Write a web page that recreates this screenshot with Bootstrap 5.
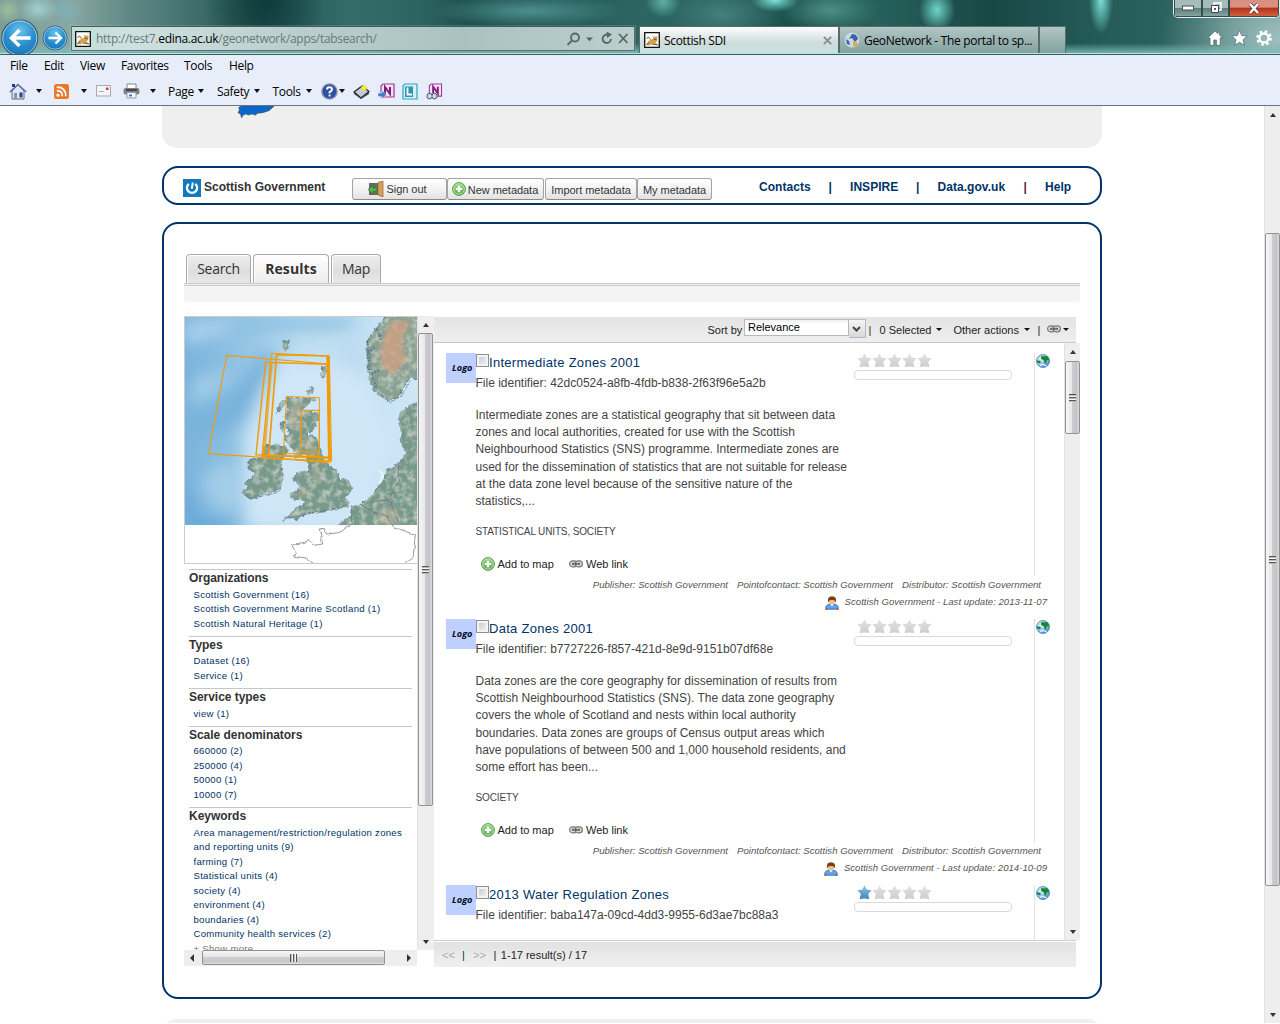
<!DOCTYPE html>
<html lang="en">
<head>
<meta charset="utf-8">
<title>Scottish SDI</title>
<link rel="stylesheet" href="https://cdn.jsdelivr.net/npm/bootstrap@5.3.0/dist/css/bootstrap.min.css">
<style>
html,body{height:1024px;overflow:hidden}
body{font:12px/17px "Liberation Sans",Arial,sans-serif;color:#333;background:#fff}
svg{display:block;flex:none}
a{text-decoration:none;color:inherit}
/* browser frame */
.aero{height:55px;border-bottom:1px solid #34605f;box-shadow:inset 0 -1px #b9e2e0;overflow:hidden;
background:
radial-gradient(ellipse 14px 14px at 8px 10px,#9cbf9a,#9cbf9a00),
radial-gradient(ellipse 20px 14px at 38px 9px,#9fd0cf,#9fd0cf00),
radial-gradient(ellipse 18px 12px at 66px 10px,#7fb0b6,#7fb0b600),
linear-gradient(#0000 80%,#7dbcbadd 98%),
radial-gradient(ellipse 18px 16px at 663px 2px,#5fb0a4,#5fb0a400),
radial-gradient(ellipse 24px 12px at 775px 0,#7de8dd,#7de8dd00),
radial-gradient(ellipse 18px 22px at 937px 10px,#70d4c9,#70d4c900),
radial-gradient(ellipse 12px 34px at 1101px 0,#7ae0d8,#7ae0d800),
radial-gradient(ellipse 95px 16px at 530px 11px,#4c8f8b,#4c8f8b00),
radial-gradient(ellipse 50px 22px at 830px 10px,#4b8f86,#4b8f8600),
radial-gradient(ellipse 60px 30px at 722px 14px,#44807c,#44807c00),
radial-gradient(ellipse 60px 60px at 265px 4px,#0f3b3b,#0f3b3b00),
radial-gradient(ellipse 120px 90px at 1280px 40px,#9cc0be,#9cc0be00),
linear-gradient(90deg,#7c9c96 0,#88a8a4 70px,#5f8885 130px,#1f5451 260px,#356b69 350px,#2d6462 420px,#1e504f 470px,#2c6562 640px,#1d504d 800px,#26605b 880px,#184846 990px,#245b58 1100px,#2f6562 1200px,#5d8583 1280px)}
.seg{font-family:"Open Sans","Noto Sans",sans-serif;color:#000;letter-spacing:-.34px}
.navbtns{width:71px;height:38px;padding:3px 0 0 1px}
.addr{width:564px;height:25px;margin-top:26px;border:1px solid #5e6e6e;border-top-color:#465b5b;background:linear-gradient(90deg,#bfdcd4 0,#cde2e0 10%,#bacfcd 40%,#a9c2c0 70%,#bccfcd);box-shadow:0 0 0 1px #ffffff22}
.url{color:#6c7877;letter-spacing:-.31px}
.tabby{height:27px;margin-top:26px;border:1px solid #5a6b6b;border-bottom:0;background:linear-gradient(#ffffff77,#ffffff22),#6f9492}
.tabby.on{width:200px;background:linear-gradient(#fdfefe,#cfdcdb 60%,#c4e2e0)}
.tabby .seg{line-height:25px}
.winbtn{right:0;top:0;width:107px;height:18px;border:1px solid #e6eeee;border-top:0;border-radius:0 0 5px 5px;overflow:hidden;background:#2c4a4a}
.winbtn>span{height:17px;border:1px solid #334e4e;border-top:0;background:linear-gradient(#a6bbbb 50%,#5f7f7e 52%,#85a3a1)}
.winbtn .cls{background:linear-gradient(#d89080 45%,#b4301c 50%,#d0603c)}
.menus{height:51px;background:#e7eefa;border-bottom:1px solid #6b7380}
.menus .mi{position:static;line-height:22px}
.caret{width:0;height:0;border:3.5px solid transparent;border-top:4px solid #111;border-bottom:0;flex:none}
.caret.s{border-width:3px;border-top-width:3px}
/* page */
.viewport{height:917px;overflow:hidden}
.site{width:940px}
.banner{height:42px;background:#efefef;border-radius:0 0 15px 15px}
.foot{height:40px;background:#efefef;border-radius:15px 15px 0 0;margin-top:20px}
.bluebox{border:2px solid #003366;border-radius:16px;background:#fff}
.topnav{height:39px;margin-top:18px;padding:0 0 0 19px}
.who{width:148px;margin:3px 0 0 3px;font-weight:700}
.xbtn{height:22px;margin-top:6px;border:1px solid #a3a3a3;border-bottom-color:#8a8a8a;border-radius:3px;background:linear-gradient(#fff,#f3f3f3 50%,#e2e2e2);font-size:11px;line-height:20px;letter-spacing:-.04px}
.tlinks{color:#003366;font-weight:700;font-size:12px;letter-spacing:.05px;margin-top:4px}
.mainbox{height:777px;margin-top:17px;padding:30px 20px 0 20px}
.xtab{height:29px;border:1px solid #a9a9a9;border-bottom:0;border-radius:4px 4px 0 0;background:linear-gradient(#eee,#dedede 60%,#e8e8e8);box-shadow:inset 1px 1px #fff;font:14px/28px "Open Sans",sans-serif;letter-spacing:-.3px;text-align:center;margin-right:2px;color:#333}
.xtab.on{background:linear-gradient(#fff,#ececec);font-weight:700;letter-spacing:.1px}
.strip{height:3px;background:#ececec;border:solid #cdcdcd;border-width:1px 0}
.substrip{height:16px;background:#f4f4f4;border-radius:0 0 4px 4px}
.work{margin-top:14px;height:651px;width:896px}
.leftcol{width:233px;height:634px;overflow:hidden}
.mapbox{border:1px solid #ccc;border-right:0;width:233px;height:248px;margin-bottom:5px}
.fac{border-top:1px solid #c6c6c6;margin:0 5px 4.8px 5px;width:223px;white-space:nowrap}
.fac h6{font-size:12px;font-weight:700;line-height:17.5px;margin:0;letter-spacing:-.04px;color:#333}
.fac div{font-size:9.6px;line-height:14.5px;padding-left:4.5px;color:#003366;letter-spacing:.28px}
.fac .more{color:#777}
/* scroll bars */
.sbv{width:16px;background:#eee;border-left:1px solid #e2e2e2}
.sbv .ar,.sbh .ar{flex:none;display:flex;align-items:center;justify-content:center}
.sbv .ar{height:17px}
.thumb{border:1px solid #929292;border-radius:2px;display:flex;align-items:center;justify-content:center;flex:none}
.sbv .thumb{width:15px;background:linear-gradient(90deg,#f5f5f5 0,#e8e8ea 45%,#cbcbd0 50%,#c4c4c9 80%,#dcdcdf)}
.sbh{height:16px;width:233px;background:#eee}
.sbh .thumb{height:15px;background:linear-gradient(#f5f5f5 0,#e6e6e6 45%,#cfcfd2 50%,#c8c8cc 80%,#ddd)}
.grip{width:7px;height:8px;background:repeating-linear-gradient(#555 0 1px,#bbb 1px 2px,#f6f6f6 2px 3px)}
.grip.h{background:repeating-linear-gradient(90deg,#555 0 1px,#bbb 1px 2px,#f6f6f6 2px 3px)}
.t-outer{margin-top:110px;height:653px}.t-left{height:473px}.t-res{margin-top:1px;height:73px}.t-h{width:183px;margin-left:2px}
.up,.dn{width:0;height:0;border:3.5px solid transparent}
.up{border-top:0;border-bottom:4px solid #333}.dn{border-bottom:0;border-top:4px solid #333}
.lt,.rt{width:0;height:0;border:4px solid transparent}
.lt{border-left:0;border-right-color:#333}.rt{border-right:0;border-left-color:#333}
/* results */
.rescol{width:646px;padding-top:1px}
.rtool{width:642px;height:26px;border-bottom:1px solid #c8c8c8;background:linear-gradient(#e4e4e4,#eee);font-size:11px;padding-left:273.5px;white-space:nowrap;line-height:26px;color:#222}
.rtool>span{flex:none}
.combo{width:104.5px;height:17px;border:1px solid #b5b8c8;background:linear-gradient(#f0f0f0,#fff 4px);font-size:11px;line-height:15px;color:#000;padding-left:3px;margin-top:2px;letter-spacing:0}
.trig{width:17px;height:19px;border:1px solid #b5b8c8;border-left:0;background:linear-gradient(#f4f4f4,#d8d8d8);margin-top:2px;display:flex;align-items:center;justify-content:center}
.list-area{width:630px;height:597px;overflow:hidden;padding:10px 0 0 12px}
.rec{width:606px;height:266px}
.rtop{height:223px}
.lg{width:30px;height:30px;background:#bdd0ff}
.rbody{width:378px;white-space:nowrap;color:#444}
.rt1{height:20px;line-height:20px;font-size:13px;color:#003366;letter-spacing:.29px}
.cb{width:13px;height:13px;border:1px solid #8e8f8f;background:linear-gradient(135deg,#c3c8ce,#f6f6f6);box-shadow:inset 0 0 0 2px #f4f4f4;margin-top:1px}
.rid{height:20px;line-height:20px;margin-left:-.5px}
.abs{margin:13.9px 0 0 -.5px;line-height:17.2px;height:104px}
.kw{font-size:10px;line-height:16px;margin:13px 0 0 -.5px;letter-spacing:-.14px}
.acts{height:20px;margin-top:14.5px;font-size:11px;line-height:20px;color:#222}
.rbar{width:158px;height:10px;border:1px solid #d9d9d9;border-radius:4px;margin-top:1px}
.rate{width:180px}
.gl{border-left:1px solid #e3e3e3;padding:1px 0 0 1px}
.meta{font-size:9.6px;font-style:italic;line-height:17px;color:#555;white-space:nowrap;width:601px;letter-spacing:.01px}
.pager{width:642px;margin-top:1px;height:25px;background:linear-gradient(#e2e2e2,#f0f0f0);font-size:11px;line-height:26px;padding-left:8px;color:#222}
.botline{border-top:1px solid #ccc;width:642px}
</style>
<script src="https://cdn.jsdelivr.net/npm/bootstrap@5.3.0/dist/js/bootstrap.bundle.min.js"></script>
</head>
<body>
<svg width="0" height="0" class="position-absolute">
<defs>
<radialGradient id="gb" cx=".5" cy=".3" r=".8"><stop offset="0" stop-color="#6cc4ee"/><stop offset=".5" stop-color="#2a8fce"/><stop offset="1" stop-color="#0f6fb4"/></radialGradient>
<radialGradient id="gg" cx=".5" cy=".3" r=".8"><stop offset="0" stop-color="#a8dc8c"/><stop offset="1" stop-color="#3f9a3a"/></radialGradient>
<radialGradient id="gw" cx=".35" cy=".35" r=".8"><stop offset="0" stop-color="#e6f4ff"/><stop offset=".6" stop-color="#7fb9ea"/><stop offset="1" stop-color="#2a64b0"/></radialGradient>
<linearGradient id="gs" x1="0" y1="0" x2="0" y2="1"><stop offset="0" stop-color="#e2e2e2"/><stop offset="1" stop-color="#cecece"/></linearGradient>
<linearGradient id="gs2" x1="0" y1="0" x2="0" y2="1"><stop offset="0" stop-color="#8fc4e8"/><stop offset="1" stop-color="#3f86bd"/></linearGradient>
<symbol id="plus" viewBox="0 0 14 14"><circle cx="7" cy="7" r="6.4" fill="url(#gg)" stroke="#4b9a45" stroke-width=".9"/><circle cx="7" cy="7" r="5.3" fill="none" stroke="#c6eab4" stroke-width=".9"/><path d="M7 3.8v6.4M3.8 7h6.4" stroke="#fff" stroke-width="2.2"/></symbol>
<symbol id="chain" viewBox="0 0 14 8"><rect x=".6" y=".8" width="7.4" height="6" rx="3" fill="#ddd" stroke="#777" stroke-width="1.2"/><rect x="6" y=".8" width="7.4" height="6" rx="3" fill="#ddd" stroke="#777" stroke-width="1.2"/><path d="M3 3.8h8" stroke="#555" stroke-width="2"/><path d="M4.200 3.800h2M7.800 3.800h2" stroke="#ccc" stroke-width=".6"/></symbol>
<symbol id="star" viewBox="0 0 15 15"><path d="M7.5 .3 9.6 4.6 14.6 5.3 11.2 9 12.4 14.2Q7.5 12.600 2.6 14.200L3.8 9 .4 5.3 5.4 4.6Z"/></symbol>
<symbol id="world" viewBox="0 0 14 14"><circle cx="7" cy="7" r="6.5" fill="url(#gw)" stroke="#4a7fc0" stroke-width=".8"/><path d="M5 2.2 11.5 2.2 13.2 5.8 10.8 6.2 9.8 9.600 8.800 10 8 6.600 5.2 5ZM.8 6.5 4.2 6.8 5 8.3 3.6 9.2 1.2 8.500Z" fill="#128a28"/><path d="M4 11.500Q7 9.500 10.500 12" stroke="#e6f6ff" stroke-width="1.400" fill="none"/></symbol>
<symbol id="man" viewBox="0 0 14 14"><path d="M.7 13.2Q.3 8.6 4.8 8.2H9.2Q13.7 8.6 13.3 13.2Z" fill="#5aa5f0" stroke="#2a64b0" stroke-width=".8"/><circle cx="7" cy="5" r="3.6" fill="#f2c08d"/><path d="M3 6.400Q2 .4 7 .3 12 .4 11 6.400 10.300 3.800 7 4 3.700 3.800 3 6.400Z" fill="#7b3f14"/><path d="M5.2 8.3 7 10.4 8.8 8.3" fill="#fff"/><path d="M.5 13.3h2.4M11.1 13.3h2.4" stroke="#c9622b" stroke-width="1.400"/></symbol>
<symbol id="cat" viewBox="0 0 16 16"><path d="M.7.7h14.6v14.6H.7Z" fill="#fff" stroke="#111" stroke-width="1.3"/><path d="M2.200 13 4 9.800 6.500 7.500 9 7 9.500 3.5 11 5 13.5 4 13.300 8.5 11.5 10.5 14 13 9 11.400 5.5 13.4Z" fill="#d5a14a"/><path d="M2.2 13 5 10.500M2.500 6.500 4.500 5 6.500 7.500M9.800 6.800 12.500 7.800M8 12 14 13" stroke="#5b4524" stroke-width=".9" fill="none"/></symbol>
<symbol id="onenote" viewBox="0 0 16 16"><path d="M4 1h11v13H2V3Z" fill="#f6e3f6" stroke="#a0369a" stroke-width="1.2"/><path d="M6 11V4l5 7V4" fill="none" stroke="#7d1d78" stroke-width="2"/></symbol>
</defs>
</svg>

<header class="aero position-relative d-flex align-items-start">
  <div class="navbtns d-flex align-items-start flex-shrink-0 mt-3">
    <svg width="39" height="39" viewBox="0 0 39 39"><circle cx="18.8" cy="19" r="18" fill="url(#gb)" stroke="#3c5a6a" stroke-width="1.2"/><circle cx="18.8" cy="19" r="17" fill="none" stroke="#bfe3f5" stroke-width=".8"/><path d="M29.500 19H11M18.500 11 10.5 19l8 8" fill="none" stroke="#fff" stroke-width="3.4"/></svg>
    <svg width="28" height="38" viewBox="0 0 28 38" class="ms-0"><circle cx="15" cy="19" r="12" fill="url(#gb)" stroke="#3c5a6a"/><circle cx="15" cy="19" r="11.2" fill="none" stroke="#bfe3f5" stroke-width=".7"/><path d="M8.500 19h11.500M15.5 13.5 21 19l-5.500 5.500" fill="none" stroke="#fff" stroke-width="2.400"/></svg>
  </div>
  <div class="addr d-flex align-items-center flex-shrink-0">
    <svg width="16" height="16" style="margin-left:3px"><use href="#cat"/></svg>
    <span class="seg url flex-grow-1" style="margin-left:5px">http://test7.<span class="text-black">edina.ac.uk</span>/geonetwork/apps/tabsearch/</span>
    <svg width="64" height="20" viewBox="0 0 64 20" class="me-1"><g fill="none" stroke="#5a6666" stroke-width="1.8"><circle cx="9" cy="8.500" r="4"/><path d="M6 11.500 1.500 16M53 5l8.500 9M61.500 5 53 14"/><path d="M43 6.200A4.200 4.200 0 1 0 45 10"/></g><path d="M20 8.500h7l-3.500 3.800ZM40.500 2.500 46 5.500 41 9Z" fill="#5a6666"/></svg>
  </div>
  <div class="tabby on d-flex align-items-center flex-shrink-0 ms-1">
    <svg width="16" height="16" class="ms-1"><use href="#cat"/></svg>
    <span class="seg ms-1 flex-grow-1">Scottish SDI</span>
    <svg width="9" height="9" viewBox="0 0 9 9" style="margin-right:6px"><path d="M.8.8 8.200 8.200M8.200.8.8 8.200" stroke="#8a8f8f" stroke-width="1.900"/></svg>
  </div>
  <div class="tabby d-flex align-items-center flex-shrink-0" style="width:200px">
    <svg width="16" height="16" viewBox="0 0 16 16" class="ms-1"><circle cx="8" cy="8" r="7.400" fill="#cdd8e8"/><path d="M8 2q5 0 6 5l-3 3-3-4-3 1ZM2 7l3 2 1 4-3-1Z" fill="#3c62a5"/><path d="m9 9 4 1 1 5-5-1Z" fill="#c9b54a"/></svg>
    <span class="seg ms-1" style="letter-spacing:-.3px">GeoNetwork - The portal to sp...</span>
  </div>
  <div class="tabby flex-shrink-0" style="width:27px"></div>
  <svg width="68" height="20" viewBox="0 0 68 20" class="position-absolute" style="left:1207px;top:28px"><g fill="#fff" stroke="#476666" stroke-width=".7"><path d="M8 3 .8 10H3v7.300h3.800V12h2.600v5.300h3.800V10h2.200L12.600 7V4H11v1.600Z"/><path d="m32.500 2.300 2.200 5.200 5.600.5-4.300 3.700 1.300 5.600-4.800-3-4.800 3 1.300-5.600-4.300-3.700 5.600-.5Z"/></g><circle cx="57" cy="10" r="4.500" fill="none" stroke="#fff" stroke-width="2.400"/><circle cx="57" cy="10" r="6.500" fill="none" stroke="#fff" stroke-width="2.600" stroke-dasharray="2.550 2.550"/></svg>
  <div class="winbtn position-absolute d-flex">
    <span class="d-flex justify-content-center align-items-center" style="width:28px"><svg width="12" height="6"><rect x=".5" y="1" width="11" height="4" fill="#fff" stroke="#3e5555"/></svg></span>
    <span class="d-flex justify-content-center align-items-center" style="width:27px"><svg width="12" height="12"><path d="M4 1h7v7H4Z" fill="none" stroke="#fff" stroke-width="1.500"/><path d="M1.500 3.500h7v7h-7Z" fill="#fff" stroke="#445"/><path d="M4 6h2v2H4Z" fill="#556"/></svg></span>
    <span class="cls d-flex justify-content-center align-items-center flex-grow-1"><svg width="12" height="11" viewBox="0 0 12 11"><path d="m2 1 8 9M10 1 2 10" stroke="#5a3030" stroke-width="3.800"/><path d="m2 1 8 9M10 1 2 10" stroke="#fff" stroke-width="2.500"/></svg></span>
  </div>
</header>

<div class="menus seg">
  <div class="d-flex" style="padding-left:10px;height:23px">
    <span class="mi" style="width:34px">File</span><span class="mi" style="width:36px">Edit</span><span class="mi" style="width:41px">View</span><span class="mi" style="width:63px">Favorites</span><span class="mi" style="width:45px">Tools</span><span class="mi">Help</span>
  </div>
  <div class="d-flex align-items-center" style="padding-left:9px;height:26px">
    <svg width="18" height="17" viewBox="0 0 18 17"><path d="M3 8v8h12V8L9 2Z" fill="#dfe6f2" stroke="#667"/><path d="M.8 9 9 1.500 17.200 9" fill="none" stroke="#6570a8" stroke-width="1.600"/><path d="M3 1h3v3H3Z" fill="#2233b5"/><path d="M5 10h3v6H5Z" fill="#8a94a8"/><path d="M10.500 9.500h3v5h-3Z" fill="#24419c"/></svg>
    <span class="caret" style="margin-left:9px"></span>
    <svg width="15" height="15" viewBox="0 0 15 15" style="margin-left:12px"><rect width="15" height="15" rx="2.500" fill="#e8782a"/><circle cx="4" cy="11.200" r="1.600" fill="#fff"/><path d="M2.800 6.600q5.600 0 5.600 5.600M2.800 3.200q9 0 9 9" fill="none" stroke="#fff" stroke-width="1.700"/></svg>
    <span class="caret" style="margin-left:12px"></span>
    <svg width="15" height="12" viewBox="0 0 15 12" style="margin-left:9px"><rect x=".5" y=".5" width="14" height="10.500" fill="#f4f5f6" stroke="#a6aaae"/><path d="M3 6.500h5" stroke="#aaa"/><path d="M10 2.500h2.500V5H10Z" fill="#d8342c"/></svg>
    <svg width="17" height="16" viewBox="0 0 17 16" style="margin-left:12px"><path d="M4 1h9v5H4Z" fill="#fff" stroke="#888"/><rect x=".6" y="5" width="15.800" height="6.500" rx="2" fill="#7a8086"/><path d="M3 7h11" stroke="#333" stroke-width="1.500"/><path d="M4 9.500h9V15H4Z" fill="#f4f9ff" stroke="#999"/><path d="M6 12.500h3" stroke="#2a6fc8" stroke-width="1.800"/></svg>
    <span class="caret" style="margin-left:9.500px"></span>
    <span style="margin-left:12.500px;width:27px">Page</span><span class="caret" style="margin-left:3px"></span>
    <span style="margin-left:13px;width:34px">Safety</span><span class="caret" style="margin-left:2.500px"></span>
    <span style="margin-left:13px;width:30px">Tools</span><span class="caret" style="margin-left:3px"></span>
    <svg width="17" height="17" viewBox="0 0 17 17" style="margin-left:9px"><circle cx="8.500" cy="8.500" r="7.600" fill="#2f50a8" stroke="#8a93a8" stroke-width="1.400"/><path d="M6 6.500Q6 4.200 8.500 4.200T11 6.500Q11 8 8.600 9v1.400" fill="none" stroke="#fff" stroke-width="1.900"/><circle cx="8.600" cy="12.600" r="1.100" fill="#fff"/></svg>
    <span class="caret" style="margin-left:1.500px"></span>
    <svg width="17" height="17" viewBox="0 0 17 17" style="margin-left:8px"><path d="M1 9 9 3l7 5.500-8 6.500Z" fill="#c5ccd4" stroke="#222" stroke-width="1.200"/><path d="m1 9 7 6 8-6.500V11l-8 5-7-5Z" fill="#39424e"/><path d="m11 .8 1.300 2.400 2.700.4-2 1.900.5 2.500L11 7 8.800 8l.4-2.500L7.500 3.600l2.300-.4Z" fill="#f5e63a"/></svg>
    <svg width="17" height="17" viewBox="0 0 17 17" style="margin-left:7.500px"><use href="#onenote" width="16" height="16" x="1"/><path d="M0 10h4V7.500l4.500 4.300L4 16v-2.500H0Z" fill="#3a7bd0" stroke="#dce9fa" stroke-width=".6"/></svg>
    <svg width="16" height="17" viewBox="0 0 16 17" style="margin-left:7px"><path d="M3 1h12v15H1V3Z" fill="#d5f0f6" stroke="#2ba6c4" stroke-width="1.200"/><path d="M3 3.500h8V14H3Z" fill="#2d93b5"/><path d="M5.500 4.500v7H10" fill="none" stroke="#fff" stroke-width="1.800"/></svg>
    <svg width="17" height="17" viewBox="0 0 17 17" style="margin-left:8px"><use href="#onenote" width="15" height="15" x="1.500"/><path d="M1 13a2 2 0 0 1 5-.5 2 2 0 0 1 5 .5 2 2 0 0 1-5 .8A2 2 0 0 1 1 13Z" fill="#cdd7e2" stroke="#44566c"/></svg>
  </div>
</div>

<div class="viewport d-flex">
<main class="flex-grow-1">
<div class="site mx-auto">
  <div class="banner"><svg width="40" height="13" viewBox="0 0 120 39" style="margin-left:75px"><path d="M112 0 96 14 78 20 62 22 54 28 46 24 34 27 26 24 18 28 14 36 10 24 3 20 7 12 5 4 14 0Z" fill="#0a66c8" stroke="#4a4a42" stroke-width="1.500"/></svg></div>

  <nav class="bluebox topnav d-flex align-items-center">
    <svg width="18" height="18" viewBox="0 0 18 18" style="margin-top:4px"><path d="M0 0h18v18H0Z" fill="#1279bf"/><path d="M5.800 4.900A5.100 5.100 0 1 0 12.300 4.900" fill="none" stroke="#fff" stroke-width="2.300"/><path d="M9.800 3.500 8.800 9.800" stroke="#fff" stroke-width="2"/></svg>
    <span class="who flex-shrink-0">Scottish Government</span>
    <a class="xbtn d-flex justify-content-center" style="width:95px"><svg width="16" height="16" viewBox="0 0 16 16" style="margin:2px 2px 0 -4px"><path d="M1 2h9v12H1Z" fill="#646a64"/><path d="M0 8.500 5 4.500V7h4v3.500H5v2.500Z" fill="#5cae52" stroke="#2f6e2a" stroke-width=".6"/><path d="M10 1.500 15 0v16l-5-2Z" fill="#d9a05a" stroke="#93642a" stroke-width=".7"/></svg>Sign out</a>
    <a class="xbtn d-flex justify-content-center" style="width:97px;line-height:22px"><svg width="14" height="14" style="margin:3px 2px 0 -1px"><use href="#plus"/></svg>New metadata</a>
    <a class="xbtn text-center" style="width:92px;margin-left:1px;line-height:22px">Import metadata</a>
    <a class="xbtn text-center" style="width:75px;line-height:22px">My metadata</a>
    <div class="tlinks d-flex" style="margin-left:47px"><span style="width:69.500px">Contacts</span><span style="width:21.500px">|</span><span style="width:66px">INSPIRE</span><span style="width:21.500px">|</span><span style="width:86px">Data.gov.uk</span><span style="width:21.500px;color:#5a2a2a">|</span><span>Help</span></div>
  </nav>

  <section class="bluebox mainbox">
    <div class="d-flex" style="padding-left:2px"><div class="xtab" style="width:65px">Search</div><div class="xtab on" style="width:76px">Results</div><div class="xtab" style="width:50px">Map</div></div>
    <div class="strip"></div><div class="substrip"></div>
    <div class="work d-flex">
      <div>
        <div class="d-flex">
          <aside class="leftcol">
            <div class="mapbox">
<svg width="232" height="246" viewBox="15 21 696 738">
<defs>
<filter id="rough" x="-5%" y="-5%" width="110%" height="110%"><feTurbulence type="fractalNoise" baseFrequency=".09" numOctaves="3" seed="4" result="n"/><feDisplacementMap in="SourceGraphic" in2="n" scale="14" xChannelSelector="R" yChannelSelector="G" result="d"/><feTurbulence type="fractalNoise" baseFrequency=".05" numOctaves="3" seed="9"/><feColorMatrix values="0 0 0 0 .70  0 0 0 0 .74  0 0 0 0 .66  0 1.600 0 0 -.68" result="t"/><feComposite in="t" in2="d" operator="in" result="tt"/><feMerge><feMergeNode in="d"/><feMergeNode in="tt"/></feMerge></filter>
<filter id="rough2" x="-5%" y="-5%" width="110%" height="110%"><feTurbulence type="fractalNoise" baseFrequency=".05" numOctaves="2" seed="7" result="n"/><feDisplacementMap in="SourceGraphic" in2="n" scale="12" xChannelSelector="R" yChannelSelector="G"/></filter>
<filter id="bl" x="-50%" y="-50%" width="200%" height="200%"><feGaussianBlur stdDeviation="22"/></filter>
<filter id="bl2" x="-50%" y="-50%" width="200%" height="200%"><feGaussianBlur stdDeviation="7"/></filter>
<clipPath id="mc"><path d="M15 21h696v624H15Z"/></clipPath>
<linearGradient id="sea"><stop offset="0" stop-color="#7ab3dc"/><stop offset=".25" stop-color="#93c4e4"/><stop offset=".5" stop-color="#bbdcf0"/><stop offset="1" stop-color="#cfe6f6"/></linearGradient>
</defs>
<path d="M15 21h696v738H15Z" fill="#fff"/>
<g clip-path="url(#mc)"><path d="M15 21h696v624H15Z" fill="url(#sea)"/>
<g filter="url(#bl)"><path d="M15 110 130 70 240 50 120 31H15Z" fill="#a9d1eb"/><path d="M120 80 280 60 480 60 560 21H200Z" fill="#8cc0e1"/><path d="M15 330Q100 280 180 220L240 130 300 130 250 220 190 330 80 390 15 380Z" fill="#79b3dc"/><path d="M50 200 160 180 100 260 20 280Z" fill="#a0cce8"/><path d="M60 520 110 470 170 460 200 590 120 600Z" fill="#a3cee9"/><path d="M190 380 260 230 300 140 440 150 560 210 640 380 560 660 200 660Z" fill="#cfe6f7"/><path d="M15 500 50 645H15Z" fill="#5ba3d4"/><path d="M15 610 170 640 170 665H15Z" fill="#64a8d6"/><path d="M450 70 560 60 560 200 480 160Z" fill="#bddcf1"/></g>
<g filter="url(#rough)" fill="#77998c" stroke="#567c88" stroke-width="2.500">
<path d="M205 450 250 440 250 412 285 402 318 412 325 425 302 452 308 500 300 540 250 550 210 568 185 545 207 535 193 520 228 490 205 475Z"/>
<path d="M318 264 360 266 400 262 404 268 376 290 362 305 416 305 414 330 400 358 380 375 408 380 428 440 440 460 468 480 478 507 510 515 515 540 495 565 510 580 490 592 430 603 400 606 365 616 352 630 328 622 310 634 342 600 375 580 380 572 340 566 328 556 360 535 355 520 340 508 350 490 385 485 388 460 375 430 345 445 345 430 325 400 312 390 330 370 318 350 325 332 312 320 325 300Z"/>
<path d="m290 300 16-28 14 0-20 32-10 6ZM300 340l14-6 0 24-10 4ZM382 240l12-10 10 6-8 16-14 0ZM308 95l16-4 2 14-10 18-6-12ZM424 170l12 0 0 28-10 6ZM312 365l10 20-6 6Z"/>
<path d="M711 278 690 285 660 310 657 340 668 370 660 390 680 430 662 455 640 472 618 478 612 510 588 540 575 558 545 580 515 592 515 615 490 632 470 655H725V278Z"/>
</g>
<g filter="url(#rough)"><path d="M618 10 725 10V212L692 200 650 265 625 272 585 245 570 215 562 175 560 95 585 60 610 30Z" fill="#86a092" stroke="#567c88" stroke-width="3"/></g>
<path d="M630 35 690 30 665 100 680 150 640 195 605 170 600 110Z" fill="#cfa183" opacity=".8" filter="url(#bl2)"/>
<g filter="url(#bl2)" fill="#c9b79c" opacity=".55"><path d="M325 290 370 275 350 330 375 350 340 360ZM370 380 400 400 395 420 370 410ZM365 530 380 530 375 560 355 555ZM600 600 650 590 650 640H600ZM400 470 412 470 420 520 405 520Z"/></g>
<path d="M562 95 570 180 590 235M566 130 582 110M575 190 600 180M590 60 606 90" stroke="#4f6f86" stroke-width="7" fill="none" stroke-dasharray="5 4" opacity=".7" filter="url(#rough2)"/>
<path d="m597 480 12 14-10 26" stroke="#e3f1f8" stroke-width="8" fill="none"/>
</g>
<g fill="none" stroke="#6a7580" stroke-width="2.200" filter="url(#rough2)"><path d="M515 585 515 640 480 668 440 672 430 655 418 658 428 702 400 706 388 692 335 706 350 730 340 738 380 745 400 760M540 582 580 605 620 618 640 650 680 665 706 672 700 740 672 760M575 575 630 570 640 600 655 640M655 460 655 520 630 560 640 580M190 545 208 568 300 545M330 625 400 608 508 590M590 250 630 276 660 262 690 215"/></g>
<g fill="none" stroke="#f09c0a"><path d="M140 136 445 162 452 456 85 431Z" stroke-width="3.400"/><path d="M275 130 448 138 455 452 245 445Z" stroke-width="3"/><path d="M290 134 445 138 447 442 266 436Z" stroke-width="5"/><path d="M257 157 442 163 449 445 228 434Z" stroke-width="4.500"/><path d="M443 140 448 452" stroke-width="8"/><path d="M250 442 450 459" stroke-width="3"/><path d="M320 260 418 263 418 434 310 430Z" stroke-width="3"/><path d="M364 301H418V426L361 424Z" stroke-width="3.600"/><path d="M273 160 251 440" stroke-width="9" opacity=".75"/></g>
</svg>
            </div>
            <div class="fac"><h6>Organizations</h6><div>Scottish Government (16)</div><div>Scottish Government Marine Scotland (1)</div><div>Scottish Natural Heritage (1)</div></div>
            <div class="fac"><h6>Types</h6><div>Dataset (16)</div><div>Service (1)</div></div>
            <div class="fac"><h6>Service types</h6><div>view (1)</div></div>
            <div class="fac"><h6>Scale denominators</h6><div>660000 (2)</div><div>250000 (4)</div><div>50000 (1)</div><div>10000 (7)</div></div>
            <div class="fac"><h6>Keywords</h6><div>Area management/restriction/regulation zones</div><div>and reporting units (9)</div><div>farming (7)</div><div>Statistical units (4)</div><div>society (4)</div><div>environment (4)</div><div>boundaries (4)</div><div>Community health services (2)</div><div class="more">+ Show more</div></div>
          </aside>
          <div class="sbv d-flex flex-column" style="width:17px"><span class="ar"><i class="up"></i></span><span class="thumb t-left"><i class="grip"></i></span><span class="ar mt-auto"><i class="dn"></i></span></div>
        </div>
        <div class="sbh d-flex"><span class="ar" style="width:16px"><i class="lt"></i></span><span class="thumb t-h"><i class="grip h"></i></span><span class="ar ms-auto" style="width:17px"><i class="rt"></i></span></div>
      </div>
      <div class="rescol">
        <div class="rtool d-flex">
          <span style="width:36.500px">Sort by</span><span class="combo">Relevance</span><span class="trig"><svg width="9" height="6"><path d="M1 1l3.500 3.500L8 1" fill="none" stroke="#444" stroke-width="2"/></svg></span>
          <span style="width:11px;margin-left:3px;color:#333">|</span><span style="width:56px">0 Selected</span><span class="caret s align-self-center" style="margin-top:-1px"></span>
          <span style="width:70px;margin-left:12px">Other actions</span><span class="caret s align-self-center" style="margin-top:-1px"></span>
          <span style="width:9px;margin-left:8px">|</span><svg width="14" height="8" style="margin-top:8px"><use href="#chain"/></svg><span class="caret s align-self-center" style="margin:-1px 0 0 2px"></span>
        </div>
        <div class="d-flex">
          <div class="list-area" id="records"></div>
          <div class="sbv d-flex flex-column"><span class="ar"><i class="up"></i></span><span class="thumb t-res"><i class="grip"></i></span><span class="ar mt-auto"><i class="dn"></i></span></div>
        </div>
        <div class="botline"></div>
        <div class="pager d-flex"><span style="width:20px;color:#aaa">&lt;&lt;</span><span style="width:11px;color:#003366">|</span><span style="width:20.500px;color:#aaa">&gt;&gt;</span><span>|</span><span style="margin-left:4.500px">1-17 result(s) / 17</span></div>
      </div>
    </div>
  </section>
  <div class="foot"></div>
</div>
</main>
<div class="sbv d-flex flex-column flex-shrink-0"><span class="ar"><i class="up"></i></span><span class="thumb t-outer"><i class="grip"></i></span><span class="ar mt-auto"><i class="dn"></i></span></div>
</div>

<script>
const data=[
{t:"Intermediate Zones 2001",id:"42dc0524-a8fb-4fdb-b838-2f63f96e5a2b",r:0,d:"2013-11-07",k:"STATISTICAL UNITS, SOCIETY",a:["Intermediate zones are a statistical geography that sit between data","zones and local authorities, created for use with the Scottish","Neighbourhood Statistics (SNS) programme. Intermediate zones are","used for the dissemination of statistics that are not suitable for release","at the data zone level because of the sensitive nature of the","statistics,..."]},
{t:"Data Zones 2001",id:"b7727226-f857-421d-8e9d-9151b07df68e",r:0,d:"2014-10-09",k:"SOCIETY",a:["Data zones are the core geography for dissemination of results from","Scottish Neighbourhood Statistics (SNS). The data zone geography","covers the whole of Scotland and nests within local authority","boundaries. Data zones are groups of Census output areas which","have populations of between 500 and 1,000 household residents, and","some effort has been..."]},
{t:"2013 Water Regulation Zones",id:"baba147a-09cd-4dd3-9955-6d3ae7bc88a3",r:1}];
document.getElementById("records").innerHTML=data.map(x=>`<article class="rec">
<div class="rtop d-flex"><svg class="lg" viewBox="0 0 30 30"><text x="6" y="17.5" font-family="Open Sans" font-weight="700" font-style="italic" font-size="9.5" textLength="20.5" lengthAdjust="spacingAndGlyphs" fill="#0a0a23">Logo</text></svg>
<div class="rbody"><div class="rt1 d-flex"><span class="cb"></span><span>${x.t}</span></div><div class="rid">File identifier: ${x.id}</div>
${x.a?`<div class="abs">${x.a.join("<br>")}</div><div class="kw">${x.k}</div><div class="acts d-flex align-items-center"><svg width="14" height="14" style="margin:0 2.5px 0 5px"><use href="#plus"/></svg><span style="width:71.5px">Add to map</span><svg width="14" height="8" style="margin-right:3px"><use href="#chain"/></svg><span>Web link</span></div>`:""}</div>
<div class="rate"><div class="d-flex" style="padding:0 0 1px 3px">${[0,1,2,3,4].map(i=>`<svg width="15" height="15" fill="url(#${i<x.r?"gs2":"gs"})"><use href="#star"/></svg>`).join("")}</div><div class="rbar"></div></div>
<div class="gl"><svg width="14" height="14"><use href="#world"/></svg></div></div>
${x.a?`<div class="meta text-end" style="padding-right:6px">Publisher: Scottish Government<span style="margin-left:9px">Pointofcontact: Scottish Government</span><span style="margin-left:9px">Distributor: Scottish Government</span></div>
<div class="meta d-flex justify-content-end"><svg width="14" height="14" style="margin:3px 6px 0 0"><use href="#man"/></svg>Scottish Government - Last update: ${x.d}</div>`:""}</article>`).join("");
</script>
</body>
</html>
